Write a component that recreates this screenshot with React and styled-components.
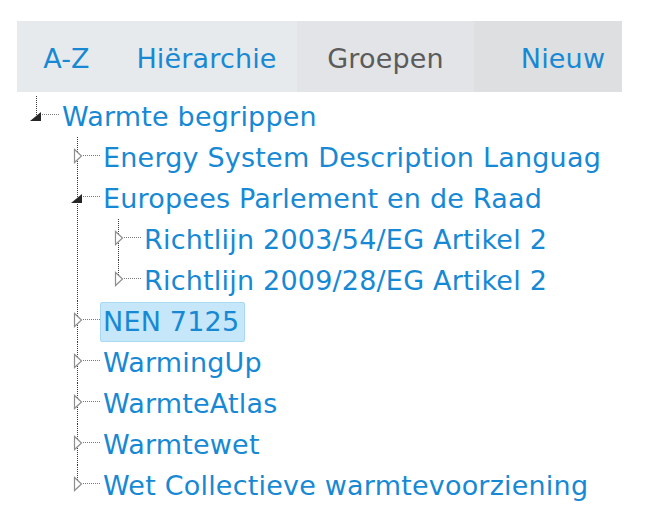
import React from 'react';
import styled, { createGlobalStyle } from 'styled-components';

const GlobalStyle = createGlobalStyle`
  html, body {
    margin: 0;
    padding: 0;
    background: #ffffff;
  }

  body {
    font-family: "DejaVu Sans", Verdana, sans-serif;
  }
`;

const Page = styled.div`
  padding: 21px 0 0 17px;
`;

const TabBar = styled.nav`
  display: flex;
  width: 605px;
  height: 71px;
  overflow: hidden;
  background: #e7eaed;
`;

const Tab = styled.div`
  flex: 0 0 ${(p) => p.$width}px;
  display: flex;
  align-items: center;
  justify-content: center;
  padding-top: 4px;
  box-sizing: border-box;
  font-size: 27px;
  letter-spacing: 0.15px;
  color: ${(p) => (p.$active ? '#5b5b5b' : '#1789d4')};
  background: ${(p) => p.$bg || 'transparent'};
  cursor: pointer;
`;

const dots = 'repeating-linear-gradient(to bottom, #3c3c3c 0 1px, transparent 1px 2px)';

const Tree = styled.ul`
  list-style: none;
  margin: 4px 0 0;
  padding: 0 0 0 15px;
`;

const Children = styled.ul`
  list-style: none;
  margin: 0;
  padding: 0 0 0 41px;
`;

const Item = styled.li`
  background-image: ${(p) => (p.$last ? 'none' : dots)};
  background-size: 1px 100%;
  background-position: 4px 0;
  background-repeat: no-repeat;
`;

const Row = styled.div`
  display: flex;
  align-items: center;
  height: 41px;
  background-image: ${(p) => (p.$last ? dots : 'none')};
  background-size: 1px 50%;
  background-position: 4px 0;
  background-repeat: no-repeat;
`;

const Toggle = styled.span`
  flex: 0 0 10px;
  height: 14px;
  display: flex;
  align-items: center;
  margin-top: -4px;

  svg {
    overflow: visible;
  }
`;

const Connector = styled.span`
  flex: 0 0 17px;
  height: 0;
  margin-top: -4px;
  border-top: 1px dotted #7a7a7a;
`;

const Label = styled.a`
  display: inline-block;
  line-height: 38px;
  padding: 0 5px 0 2px;
  border: 1px solid ${(p) => (p.$selected ? '#a9d8f3' : 'transparent')};
  border-radius: 2px;
  background: ${(p) => (p.$selected ? '#c6e6f9' : 'transparent')};
  font-size: 27px;
  letter-spacing: 0.2px;
  color: #1789d4;
  white-space: nowrap;
  cursor: pointer;
`;

const Expanded = () => (
  <svg width="10" height="14" viewBox="0 0 10 14">
    <polygon points="-2,13 9,13 9,4" fill="#262626" />
  </svg>
);

const Collapsed = () => (
  <svg width="10" height="14" viewBox="0 0 10 14">
    <polygon points="1.5,0.5 1.5,13.5 8.5,7" fill="#ffffff" stroke="#8e8e8e" strokeWidth="1.2" />
  </svg>
);

const tree = [
  {
    label: 'Warmte begrippen',
    children: [
      { label: 'Energy System Description Languag' },
      {
        label: 'Europees Parlement en de Raad',
        children: [
          { label: 'Richtlijn 2003/54/EG Artikel 2' },
          { label: 'Richtlijn 2009/28/EG Artikel 2' },
        ],
      },
      { label: 'NEN 7125', selected: true },
      { label: 'WarmingUp' },
      { label: 'WarmteAtlas' },
      { label: 'Warmtewet' },
      { label: 'Wet Collectieve warmtevoorziening' },
    ],
  },
];

const Node = ({ node, last }) => (
  <Item $last={last}>
    <Row $last={last}>
      <Toggle>{node.children ? <Expanded /> : <Collapsed />}</Toggle>
      <Connector />
      <Label $selected={node.selected}>{node.label}</Label>
    </Row>
    {node.children && (
      <Children>
        {node.children.map((child, i) => (
          <Node key={child.label} node={child} last={i === node.children.length - 1} />
        ))}
      </Children>
    )}
  </Item>
);

export default function App() {
  return (
    <Page>
      <GlobalStyle />
      <TabBar>
        <Tab $width={99}>A-Z</Tab>
        <Tab $width={181}>Hiërarchie</Tab>
        <Tab $width={177} $active $bg="#e2e4e7">Groepen</Tab>
        <Tab $width={178} $bg="#dedfe0">Nieuw</Tab>
      </TabBar>
      <Tree>
        {tree.map((node, i) => (
          <Node key={node.label} node={node} last={i === tree.length - 1} />
        ))}
      </Tree>
    </Page>
  );
}
